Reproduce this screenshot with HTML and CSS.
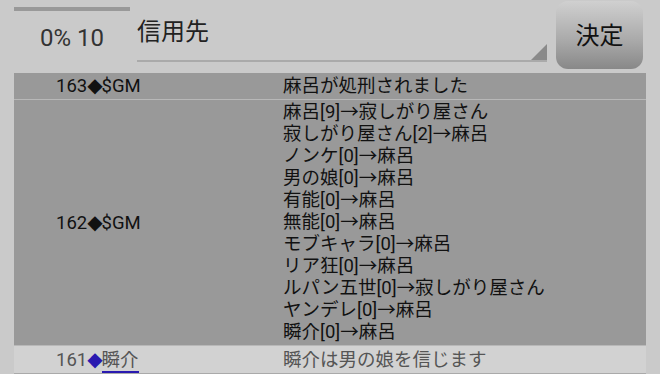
FILE: index.html
```html
<!DOCTYPE html>
<html lang="ja">
<head>
    <meta charset="UTF-8">
    <meta name="viewport" content="width=device-width, initial-scale=1.0">
    <title>投票</title>
    <link rel="stylesheet" href="styles.css">
</head>
<body>
    <div class="header">
        <div class="rate">0% 10</div>
        <div class="target">
            <span class="target-label">信用先</span>
            <span class="spinner-arrow"></span>
        </div>
        <button class="decide">決定</button>
    </div>

    <div class="log">
        <div class="row row-dark row-first">
            <div class="who">163<span class="mark">◆</span>$GM</div>
            <div class="msg">麻呂が処刑されました</div>
        </div>
        <div class="row row-dark row-votes">
            <div class="who">162<span class="mark">◆</span>$GM</div>
            <div class="msg">
                麻呂[9]→寂しがり屋さん<br>
                寂しがり屋さん[2]→麻呂<br>
                ノンケ[0]→麻呂<br>
                男の娘[0]→麻呂<br>
                有能[0]→麻呂<br>
                無能[0]→麻呂<br>
                モブキャラ[0]→麻呂<br>
                リア狂[0]→麻呂<br>
                ルパン五世[0]→寂しがり屋さん<br>
                ヤンデレ[0]→麻呂<br>
                瞬介[0]→麻呂
            </div>
        </div>
        <div class="row row-light">
            <div class="who">161<span class="mark mark-user">◆</span><a class="name" href="#">瞬介</a></div>
            <div class="msg">瞬介は男の娘を信じます</div>
        </div>
    </div>
</body>
</html>
```

FILE: styles.css
```css
body {
    margin: 0;
    background-color: #cacaca;
    font-family: Roboto, "Noto Sans CJK JP", sans-serif;
    color: #111;
}
.header {
    display: flex;
    height: 73px;
    padding-left: 14px;
    box-sizing: border-box;
}
.rate {
    width: 116px;
    margin-top: 7px;
    height: 60px;
    border-top: 4px solid #999;
    box-sizing: border-box;
    text-align: center;
    font-size: 24px;
    line-height: 54px;
    color: #333;
}
.target {
    position: relative;
    flex: 1;
    margin-left: 7px;
    margin-right: 9px;
    height: 62px;
    border-bottom: 2px solid #aaa;
    box-sizing: border-box;
}
.target-label {
    display: block;
    padding-top: 17px;
    font-size: 24px;
    line-height: 30px;
    color: #222;
}
.spinner-arrow {
    position: absolute;
    right: 0;
    bottom: 0;
    width: 0;
    height: 0;
    border-left: 16px solid transparent;
    border-bottom: 16px solid #8a8a8a;
}
.decide {
    width: 87px;
    height: 68px;
    margin-top: 1px;
    margin-right: 17px;
    border: none;
    border-radius: 12px;
    background: linear-gradient(#d0d0d0, #a8a8a8 60%, #888);
    font-family: "Noto Sans CJK JP", sans-serif;
    font-size: 24px;
    color: #111;
    padding: 0 0 3px 0;
}
.log {
    margin: 0 14px;
    font-size: 18.5px;
    line-height: 22px;
}
.row {
    display: flex;
    align-items: center;
}
.row-dark {
    background-color: #999;
    border-bottom: 1px solid #b8b8b8;
}
.row-first {
    padding: 1px 0 2px 0;
}
.row-votes {
    padding: 1px 0 2px 0;
}
.row-light {
    background-color: #d2d2d2;
    border-bottom: 1px solid #aaa;
    color: #555;
    padding: 2px 0 2px 0;
}
.who {
    width: 227px;
    padding-left: 42px;
    flex-shrink: 0;
}
.mark {
    font-family: "DejaVu Sans", sans-serif;
    font-size: 20px;
    letter-spacing: -1px;
}
.mark-user {
    color: #2a1ab0;
}
.name {
    color: #555;
    text-decoration: none;
    border-bottom: 2px solid #2a1ab0;
}
```
